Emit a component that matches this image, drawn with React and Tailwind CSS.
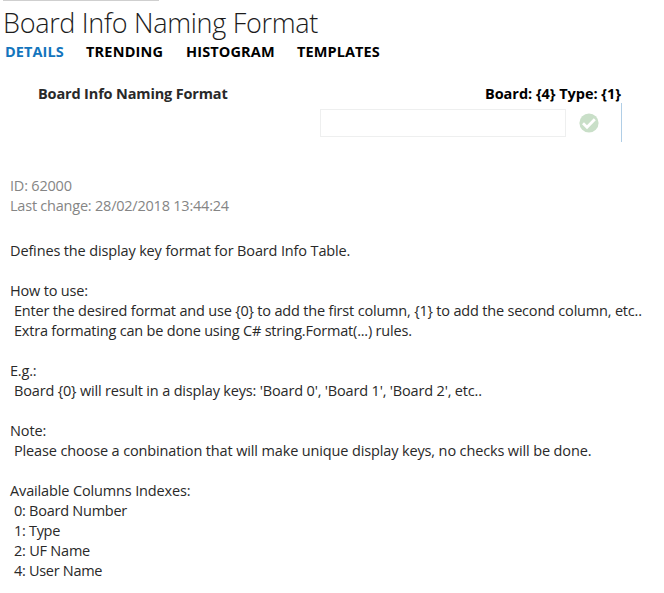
const tabs = [
  { label: 'DETAILS', style: 'w-[81px] tracking-[0.08px] text-[#1375bd]' },
  { label: 'TRENDING', style: 'w-[100px] tracking-[0.2px]' },
  { label: 'HISTOGRAM', style: 'w-[111px] tracking-[0.13px]' },
  { label: 'TEMPLATES', style: 'tracking-[0.1px]' },
];

const lines = [
  { text: 'Defines the display key format for Board Info Table.', style: 'tracking-[-0.14px]' },
  null,
  { text: 'How to use:', style: 'tracking-[-0.18px]' },
  { text: 'Enter the desired format and use {0} to add the first column, {1} to add the second column, etc..', style: 'pl-1 tracking-[-0.19px]' },
  { text: 'Extra formating can be done using C# string.Format(...) rules.', style: 'pl-1 tracking-[-0.2px]' },
  null,
  { text: 'E.g.:', style: 'tracking-[-0.2px]' },
  { text: "Board {0} will result in a display keys: 'Board 0', 'Board 1', 'Board 2', etc..", style: 'pl-1 tracking-[-0.17px]' },
  null,
  { text: 'Note:', style: 'tracking-[-0.1px]' },
  { text: 'Please choose a conbination that will make unique display keys, no checks will be done.', style: 'pl-1 tracking-[-0.135px]' },
  null,
  { text: 'Available Columns Indexes:', style: 'tracking-[-0.14px]' },
  { text: '0: Board Number', style: 'pl-1 tracking-[-0.25px]' },
  { text: '1: Type', style: 'pl-1 tracking-[-0.3px]' },
  { text: '2: UF Name', style: 'pl-1 tracking-[-0.22px]' },
  { text: '4: User Name', style: 'pl-1 tracking-[-0.3px]' },
];

export default function App() {
  return (
    <main className="h-[593px] w-[664px] overflow-hidden bg-white font-['Open_Sans','Noto_Sans',sans-serif] text-[14.5px] leading-5 whitespace-nowrap text-[#292929]">
      <div className="ml-[3px] h-px w-[156px] bg-[#cfcfcf]" />
      <h1 className="h-[41px] pt-[2px] pl-[3px] text-[27px] leading-[39px] font-light tracking-[-0.3px] text-[#1c1c1c]">
        Board Info Naming Format
      </h1>
      <nav className="flex h-5 pl-[5px] font-bold text-black">
        {tabs.map((tab) => (
          <span key={tab.label} className={tab.style}>{tab.label}</span>
        ))}
      </nav>
      <section className="mt-[22px] h-[92px]">
        <div className="flex h-[19px] justify-between pr-[43px] pl-[38px] font-bold">
          <span className="tracking-[-0.15px]">Board Info Naming Format</span>
          <span className="tracking-[-0.03px] text-black">{'Board: {4} Type: {1}'}</span>
        </div>
        <div className="ml-[320px] flex h-[39px] w-[302px] items-center border-r border-[#b0cee6]">
          <input aria-label="Format" className="h-7 w-[246px] border border-[#eeefef] bg-white outline-none" />
          <svg className="ml-[13px] h-5 w-5" viewBox="0 0 20 20" fill="none">
            <circle cx="10" cy="10" r="9.6" fill="#c9dfc8" />
            <path d="M4 10.3 8 14.2l7.8-8" stroke="white" strokeWidth="2.8" />
          </svg>
        </div>
      </section>
      <div className="h-10 pl-[10px] text-[#858585]">
        <p className="tracking-[-0.2px]">ID: 62000</p>
        <p className="tracking-[-0.22px]">Last change: 28/02/2018 13:44:24</p>
      </div>
      <div className="mt-[25px] pl-[10px]">
        {lines.map((line, index) => (
          <p key={index} className="h-5">
            {line && <span className={line.style}>{line.text}</span>}
          </p>
        ))}
      </div>
    </main>
  );
}
